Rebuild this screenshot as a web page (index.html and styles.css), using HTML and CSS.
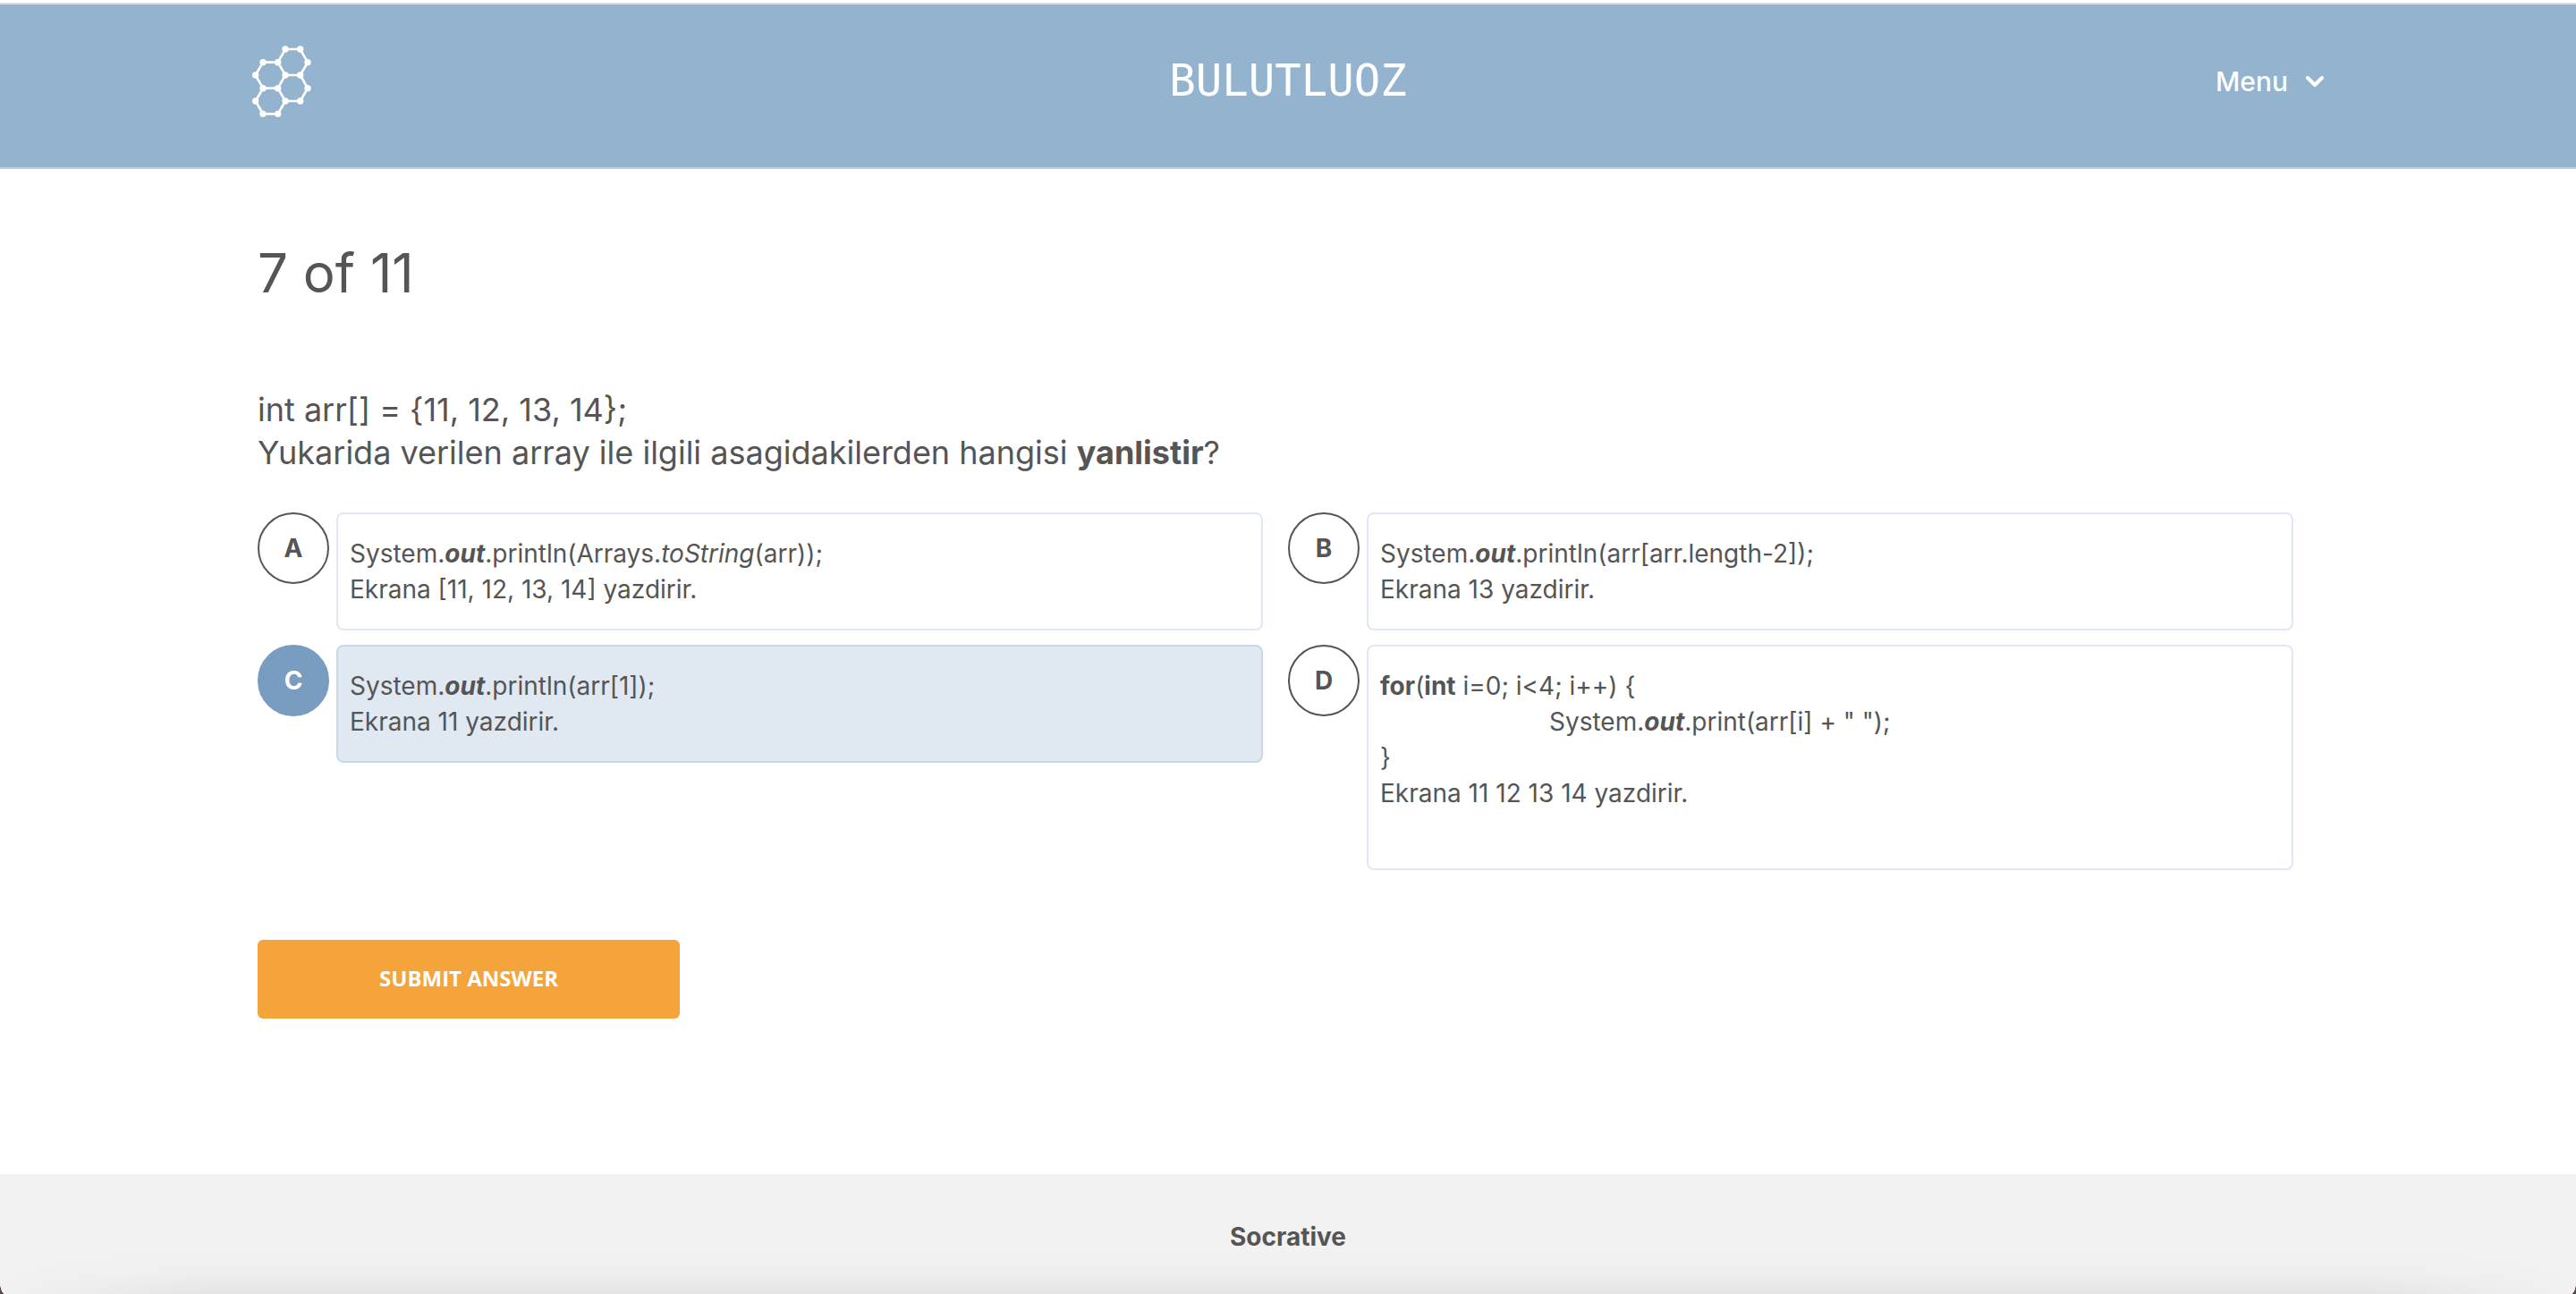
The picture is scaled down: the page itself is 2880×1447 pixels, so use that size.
FILE: index.html
```html
<!DOCTYPE html>
<html lang="tr">
<head>
<meta charset="utf-8">
<title>Socrative</title>
<meta name="viewport" content="width=device-width, initial-scale=1">
<link rel="stylesheet" href="styles.css">
</head>
<body>
<div class="page">
  <header class="header">
    <svg class="logo" viewBox="66 152 198 240" aria-hidden="true">
      <path class="logo-bonds" d="M177 164H227L252 208L227 251L252 295L227 338H177L152 381H102L77 338L102 295L77 251L102 208H152ZM152 208L177 251H227M177 251L152 295H102M152 295L177 338"/>
      <g class="logo-atoms">
        <circle cx="177" cy="164" r="11"/><circle cx="227" cy="164" r="11"/>
        <circle cx="102" cy="208" r="11"/><circle cx="152" cy="208" r="11"/><circle cx="252" cy="208" r="11"/>
        <circle cx="77" cy="251" r="11"/><circle cx="177" cy="251" r="11"/><circle cx="227" cy="251" r="11"/>
        <circle cx="102" cy="295" r="11"/><circle cx="152" cy="295" r="11"/><circle cx="252" cy="295" r="11"/>
        <circle cx="77" cy="338" r="11"/><circle cx="177" cy="338" r="11"/><circle cx="227" cy="338" r="11"/>
        <circle cx="102" cy="381" r="11"/><circle cx="152" cy="381" r="11"/>
      </g>
    </svg>
    <div class="room">BULUTLUOZ</div>
    <button class="menu" type="button">Menu
      <svg class="chevron" viewBox="0 0 20 12" aria-hidden="true"><path d="M2 2L10 10L18 2"/></svg>
    </button>
  </header>

  <main class="main">
    <h1 class="progress">7 of 11</h1>
    <form class="quiz">
      <p class="question" id="question">int arr[] = {11, 12, 13, 14};<br>Yukarida verilen array ile ilgili asagidakilerden hangisi <b>yanlistir</b>?</p>
      <div class="options" role="radiogroup" aria-labelledby="question">
        <label class="option">
          <span class="marker"><input type="radio" name="answer" value="A"><span class="letter">A</span></span>
          <span class="answer">
            <span class="line">System.<b><i>out</i></b>.println(Arrays.<i>toString</i>(arr));</span>
            <span class="line">Ekrana [11, 12, 13, 14] yazdirir.</span>
          </span>
        </label>
        <label class="option">
          <span class="marker"><input type="radio" name="answer" value="B"><span class="letter">B</span></span>
          <span class="answer">
            <span class="line">System.<b><i>out</i></b>.println(arr[arr.length-2]);</span>
            <span class="line">Ekrana 13 yazdirir.</span>
          </span>
        </label>
        <label class="option">
          <span class="marker"><input type="radio" name="answer" value="C" checked><span class="letter">C</span></span>
          <span class="answer">
            <span class="line">System.<b><i>out</i></b>.println(arr[1]);</span>
            <span class="line">Ekrana 11 yazdirir.</span>
          </span>
        </label>
        <label class="option">
          <span class="marker"><input type="radio" name="answer" value="D"><span class="letter">D</span></span>
          <span class="answer">
            <span class="line"><b>for</b>(<b>int</b> i=0; i&lt;4; i++) {</span>
            <span class="line indented">System.<b><i>out</i></b>.print(arr[i] + " ");</span>
            <span class="line">}</span>
            <span class="line">Ekrana 11 12 13 14 yazdirir.</span>
            <span class="line"></span>
          </span>
        </label>
      </div>
      <button class="submit" type="submit">SUBMIT ANSWER</button>
    </form>
  </main>

  <footer class="footer">Socrative</footer>
</div>
</body>
</html>
```
FILE: styles.css
```css
* {
  box-sizing: border-box;
}

html {
  background: #4f4846;
}

body {
  margin: 0;
  font-family: Inter, "Liberation Sans", sans-serif;
  font-size: 28px;
  line-height: 40px;
  color: #555;
}

.page {
  display: flex;
  flex-direction: column;
  min-height: 100vh;
  padding-top: 3px;
  background: #fff;
  border-radius: 0 0 6px 6px / 0 0 14px 14px;
  overflow: hidden;
}

.header {
  display: grid;
  grid-template-columns: 1fr auto 1fr;
  align-items: center;
  padding: 46px calc(10% - 6px) 56px;
  background: #93b3cf;
  border-top: 2px solid #ddd;
  border-bottom: 2px solid #ccc;
  color: #fff;
}

.logo {
  width: 66px;
  height: 80px;
}

.logo-bonds {
  fill: none;
  stroke: #fff;
  stroke-width: 8;
}

.logo-atoms {
  fill: #fff;
}

.room {
  font-family: "DejaVu Sans Mono", monospace;
  font-size: 49px;
  line-height: 56px;
}

.menu {
  display: flex;
  align-items: center;
  justify-self: end;
  gap: 20px;
  padding: 0;
  border: 0;
  background: none;
  font: 500 30px/40px Inter, "Liberation Sans", sans-serif;
  color: inherit;
  cursor: pointer;
}

.chevron {
  width: 20px;
  height: 12px;
  fill: none;
  stroke: currentColor;
  stroke-width: 4;
  stroke-linecap: round;
  stroke-linejoin: round;
}

.main {
  flex: 1;
  padding: 80px 10%;
}

.progress {
  margin: 0 0 93px;
  font-size: 60px;
  font-weight: 400;
  line-height: 72px;
}

.question {
  margin: 0 0 43px;
  font-size: 36px;
  line-height: 48px;
}

.options {
  display: grid;
  grid-template-columns: 1fr 1fr;
  align-items: start;
  row-gap: 16px;
  margin-bottom: 78px;
}

.option {
  display: flex;
  align-items: flex-start;
  gap: 8px;
  padding-right: 28px;
  cursor: pointer;
}

.marker {
  display: grid;
  flex: none;
  place-items: center;
}

.marker > * {
  grid-area: 1 / 1;
}

.marker input {
  width: 80px;
  height: 80px;
  margin: 0;
  appearance: none;
  border: 2px solid #555;
  border-radius: 50%;
}

.marker input:checked {
  border-color: #789dc1;
  background: #789dc1;
}

.letter {
  font-weight: 700;
}

input:checked + .letter {
  color: #fff;
}

.answer {
  flex: 1;
  padding: 24px 13px;
  border: 2px solid #e0e9f3;
  border-radius: 8px;
}

.line {
  display: block;
  min-height: 40px;
}

.indented {
  padding-left: 189px;
}

.option:has(input:checked) .answer {
  border-color: #c8d8e7;
  background: #e0e8f2;
}

.submit {
  width: 472px;
  max-width: 100%;
  height: 88px;
  padding: 0 0 2px;
  border: 0;
  border-radius: 6px;
  background: #f5a33b;
  font: 700 24px/32px "Open Sans", sans-serif;
  color: #fff;
  cursor: pointer;
}

.footer {
  padding: 50px 10% 44px;
  background:
    linear-gradient(to right, #f2f2f2, transparent 240px calc(100% - 240px), #f2f2f2),
    linear-gradient(to top, #e4e4e4, #efefef 24px, #f2f2f2 48px);
  font-weight: 700;
  text-align: center;
}
```
